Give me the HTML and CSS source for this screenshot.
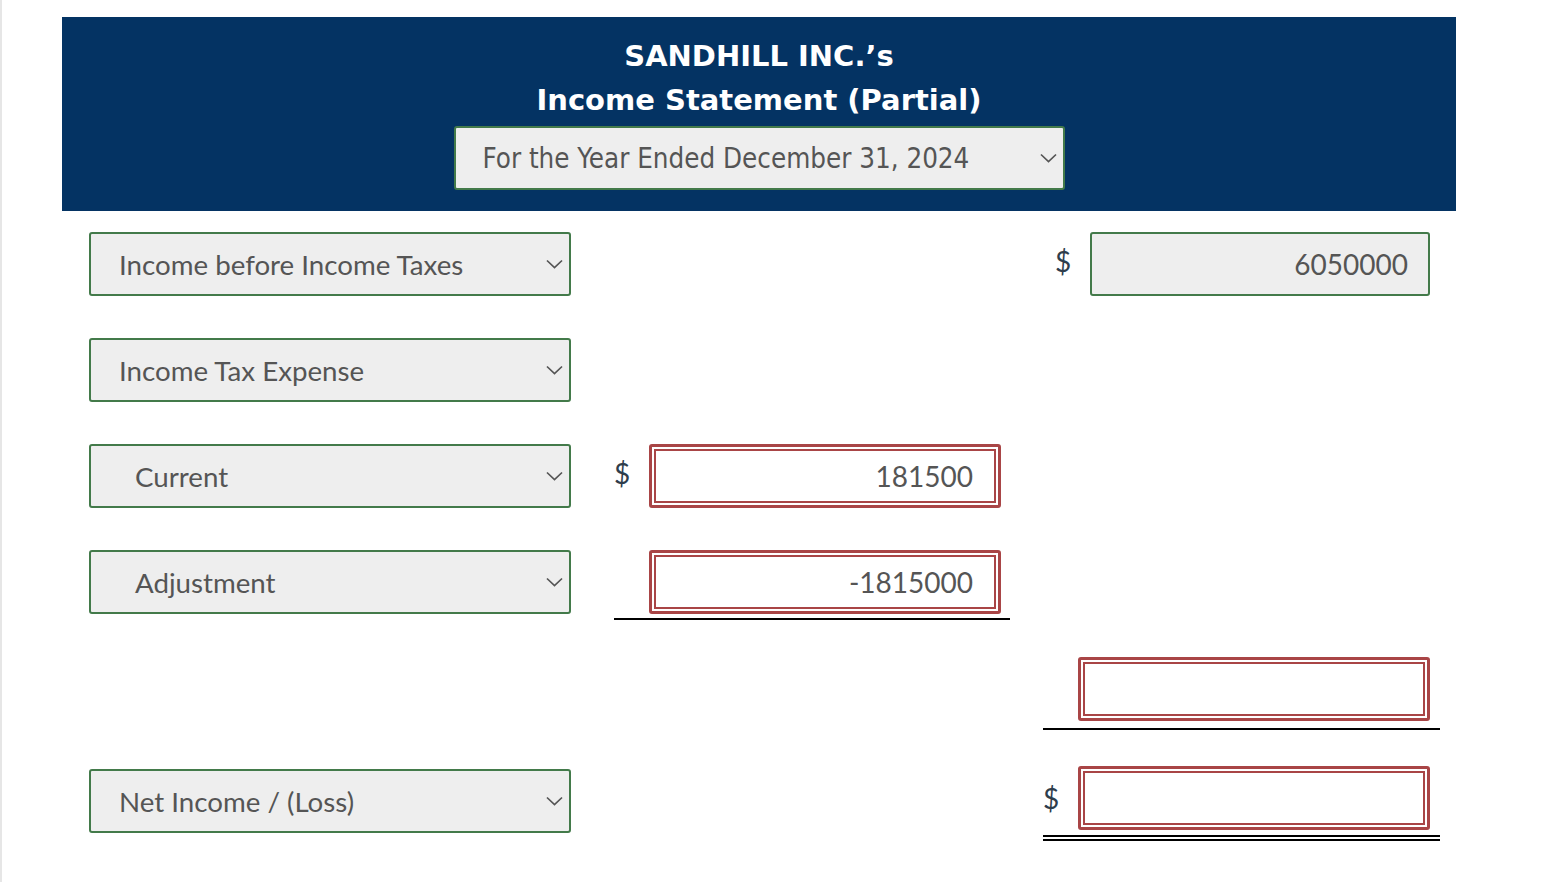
FILE: index.html
```html
<!DOCTYPE html>
<html lang="en">
<head>
    <meta charset="UTF-8">
    <meta name="viewport" content="width=device-width, initial-scale=1.0">
    <title>Income Statement (Partial)</title>
    <link rel="stylesheet" href="styles.css">
</head>
<body>
    <div class="page">
        <div class="heading">
            <h1>SANDHILL INC.’s<br>Income Statement (Partial)</h1>
            <div class="select date-select">
                <span>For the Year Ended December 31, 2024</span>
                <svg class="chevron" width="17" height="10" viewBox="0 0 17 10"><path d="M1 1.5 L8.5 8.5 L16 1.5" /></svg>
            </div>
        </div>

        <div class="sheet">
            <div class="line">
                <div class="select">
                    <span>Income before Income Taxes</span>
                    <svg class="chevron" width="17" height="10" viewBox="0 0 17 10"><path d="M1 1.5 L8.5 8.5 L16 1.5" /></svg>
                </div>
                <div class="mid"></div>
                <div class="total total-first">
                    <span class="dollar">$</span>
                    <input class="amount filled" type="text" value="6050000">
                </div>
            </div>

            <div class="line">
                <div class="select">
                    <span>Income Tax Expense</span>
                    <svg class="chevron" width="17" height="10" viewBox="0 0 17 10"><path d="M1 1.5 L8.5 8.5 L16 1.5" /></svg>
                </div>
                <div class="mid"></div>
                <div class="total"></div>
            </div>

            <div class="line">
                <div class="select indent">
                    <span>Current</span>
                    <svg class="chevron" width="17" height="10" viewBox="0 0 17 10"><path d="M1 1.5 L8.5 8.5 L16 1.5" /></svg>
                </div>
                <div class="mid">
                    <span class="dollar">$</span>
                    <input class="amount wrong" type="text" value="181500">
                </div>
                <div class="total"></div>
            </div>

            <div class="line">
                <div class="select indent">
                    <span>Adjustment</span>
                    <svg class="chevron" width="17" height="10" viewBox="0 0 17 10"><path d="M1 1.5 L8.5 8.5 L16 1.5" /></svg>
                </div>
                <div class="mid underline">
                    <span class="dollar"></span>
                    <input class="amount wrong" type="text" value="-1815000">
                </div>
                <div class="total"></div>
            </div>

            <div class="line subtotal">
                <div class="blank"></div>
                <div class="mid"></div>
                <div class="total underline">
                    <span class="dollar"></span>
                    <input class="amount wrong" type="text" value="">
                </div>
            </div>

            <div class="line last">
                <div class="select">
                    <span>Net Income / (Loss)</span>
                    <svg class="chevron" width="17" height="10" viewBox="0 0 17 10"><path d="M1 1.5 L8.5 8.5 L16 1.5" /></svg>
                </div>
                <div class="mid"></div>
                <div class="total double">
                    <span class="dollar">$</span>
                    <input class="amount wrong" type="text" value="">
                </div>
            </div>
        </div>
    </div>
</body>
</html>
```

FILE: styles.css
```css
body {
    margin: 0;
    background: #ffffff;
    font-family: 'Lato', 'Open Sans', sans-serif;
}
.page {
    border-left: 2px solid #e6e6e6;
    min-height: 882px;
    padding-top: 17px;
    box-sizing: border-box;
}
.heading {
    margin-left: 60px;
    width: 1394px;
    height: 194px;
    background: #043363;
    padding-top: 17px;
    box-sizing: border-box;
    display: flex;
    flex-direction: column;
    align-items: center;
}
h1 {
    margin: 0;
    color: #ffffff;
    font-family: 'DejaVu Sans', Verdana, sans-serif;
    font-weight: bold;
    font-size: 29px;
    line-height: 44px;
    text-align: center;
}
.select {
    display: flex;
    align-items: center;
    justify-content: space-between;
    height: 64px;
    width: 482px;
    flex: none;
    box-sizing: border-box;
    padding: 0 6px 0 28px;
    background: #eeeeee;
    border: 2px solid #437a4a;
    border-radius: 3px;
    color: #555555;
    font-size: 27.7px;
}
.select.indent {
    padding-left: 44px;
}
.date-select {
    width: 611px;
    margin-top: 4px;
    padding-left: 27px;
    font-family: 'DejaVu Sans Condensed', 'DejaVu Sans', sans-serif;
    font-size: 27.5px;
}
.chevron {
    fill: none;
    stroke: #555555;
    stroke-width: 1.7;
    flex: none;
}
.sheet {
    padding-left: 87px;
    padding-top: 21px;
}
.line {
    display: flex;
    height: 64px;
    margin-bottom: 42px;
}
.blank {
    width: 482px;
    flex: none;
}
.mid, .total {
    display: flex;
    align-items: flex-start;
    box-sizing: border-box;
    flex: none;
}
.mid {
    width: 396px;
    margin-left: 43px;
}
.total {
    width: 397px;
    margin-left: 33px;
}
/* sibling margins collapse, so these replace the 42px above */
.line.subtotal {
    margin-top: 43px;
}
.line.last {
    margin-top: 48px;
}
.dollar {
    width: 35px;
    flex: none;
    color: #2e3d4c;
    font-size: 28px;
    line-height: 58px;
}
.total-first .dollar {
    width: 47px;
    padding-left: 12px;
    box-sizing: border-box;
}
.amount {
    margin: 0;
    height: 64px;
    box-sizing: border-box;
    font-family: 'Lato', sans-serif;
    font-size: 28px;
    color: #555555;
    text-align: right;
    outline: none;
}
.amount.filled {
    width: 340px;
    background: #eeeeee;
    border: 2px solid #437a4a;
    border-radius: 3px;
    padding: 0 20px 0 10px;
}
.amount.wrong {
    width: 352px;
    background: #ffffff;
    border: 3px solid #a94546;
    border-radius: 3px;
    box-shadow: inset 0 0 0 2px #ffffff, inset 0 0 0 4px #a94546;
    padding: 0 25px 0 10px;
}
.mid.underline {
    border-bottom: 2px solid #000000;
    height: 70px;
}
.total.underline {
    border-bottom: 2px solid #000000;
    height: 73px;
}
.double {
    border-bottom: 6px double #000000;
    height: 72px;
}
.double .amount {
    margin-top: -3px;
}
```
